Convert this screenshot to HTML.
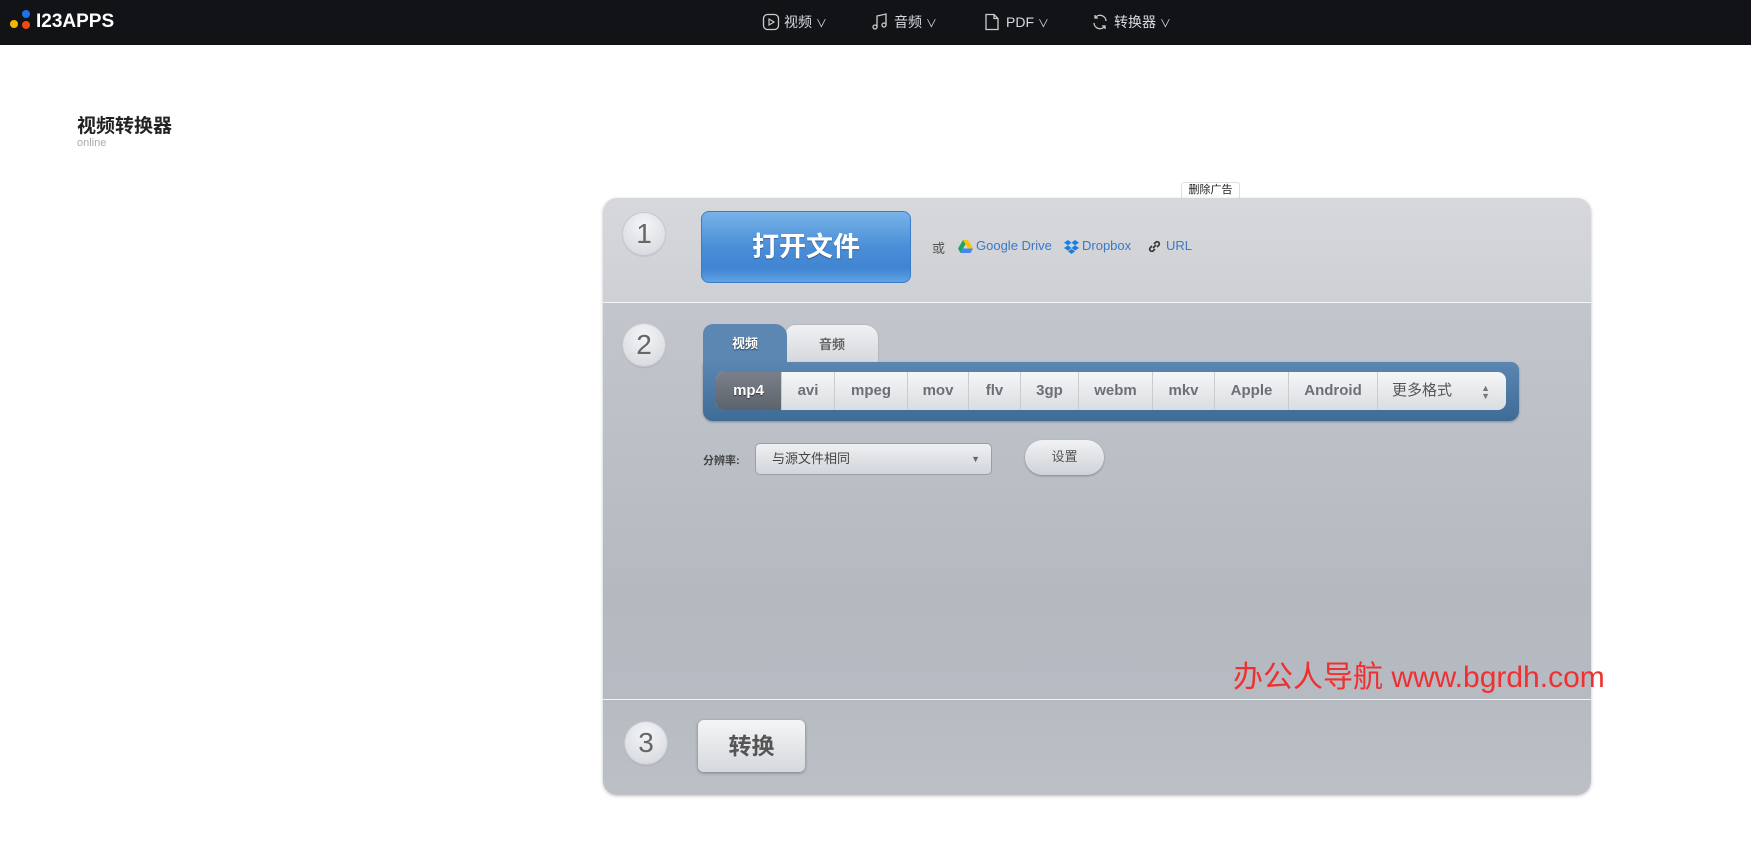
<!DOCTYPE html>
<html><head><meta charset="utf-8"><style>
*{margin:0;padding:0;box-sizing:border-box}
body{width:1751px;height:852px;background:#fff;font-family:"Liberation Sans","Noto Sans CJK SC",sans-serif;position:relative;overflow:hidden}
.nav{position:absolute;left:0;top:0;width:1751px;height:45px;background:#121317}
.abs{position:absolute}
.ni{position:absolute;top:12px;color:#d8dae0;font-size:14px;line-height:20px}
.ni svg{position:absolute;top:1px}
.box{position:absolute;left:603px;top:198px;width:988px;height:597px;border-radius:14px;overflow:hidden;
background:linear-gradient(#d7d8dc 0,#cdd0d4 104px,#c2c6cc 104px,#b4b9c0 400px,#b6bbc2 501px,#bcc0c6 597px);box-shadow:0 1px 3px rgba(0,0,0,.25)}
.line{position:absolute;left:0;width:988px;height:1px;background:#f2f3f5}
.circ{position:absolute;width:42px;height:42px;border-radius:50%;background:radial-gradient(circle at 50% 30%,#f4f5f7,#d2d5da);box-shadow:0 0 0 1px #c6c9ce,0 1px 2px rgba(0,0,0,.2);color:#666;font-size:28px;text-align:center;line-height:42px}
.fmt{position:absolute;top:0;height:38px;line-height:38px;text-align:center;color:#6b6f76;font-weight:bold;font-size:15px;border-right:1px solid #c8cbd0}
</style></head><body>
<div class="nav">
 <div class="abs" style="left:22px;top:10px;width:8px;height:8px;border-radius:50%;background:#1a73e8"></div>
 <div class="abs" style="left:10px;top:20px;width:8px;height:8px;border-radius:50%;background:#f6b600"></div>
 <div class="abs" style="left:22px;top:21px;width:8px;height:8px;border-radius:50%;background:#f04a12"></div>
 <div class="abs" style="left:36px;top:0;line-height:43px;color:#fff;font-weight:bold;font-size:19px">I23APPS</div>
 <div class="ni" style="left:762px"><svg width="18" height="18" viewBox="0 0 18 18" style="left:0"><rect x="1.5" y="1.5" width="15" height="15" rx="4" fill="none" stroke="#ccc" stroke-width="1.3"/><path d="M7 6v6l5-3z" fill="none" stroke="#ccc" stroke-width="1.2"/></svg><span style="margin-left:22px">视频 <small style="font-size:11px">∨</small></span></div>
 <div class="ni" style="left:871px"><svg width="18" height="18" viewBox="0 0 18 18" style="left:0"><path d="M6 14V3l9-2v11" fill="none" stroke="#ccc" stroke-width="1.3"/><circle cx="4" cy="14" r="2" fill="none" stroke="#ccc" stroke-width="1.3"/><circle cx="13" cy="12" r="2" fill="none" stroke="#ccc" stroke-width="1.3"/></svg><span style="margin-left:23px">音频 <small style="font-size:11px">∨</small></span></div>
 <div class="ni" style="left:983px"><svg width="18" height="18" viewBox="0 0 18 18" style="left:0"><path d="M3 1.5h8l4 4v11H3z M11 1.5v4h4" fill="none" stroke="#ccc" stroke-width="1.3"/></svg><span style="margin-left:23px">PDF <small style="font-size:11px">∨</small></span></div>
 <div class="ni" style="left:1091px"><svg width="18" height="18" viewBox="0 0 18 18" style="left:0"><path d="M15 8A6 6 0 0 0 4 5M3 10a6 6 0 0 0 11 3M4 2v3h3M14 16v-3h-3" fill="none" stroke="#ccc" stroke-width="1.3"/></svg><span style="margin-left:23px">转换器 <small style="font-size:11px">∨</small></span></div>
</div>
<div class="abs" style="left:77px;top:111px;font-size:19px;font-weight:bold;color:#222">视频转换器</div>
<div class="abs" style="left:77px;top:137px;font-size:11px;color:#aaa">online</div>
<div class="abs" style="left:1181px;top:182px;width:59px;height:16px;border:1px solid #ddd;border-bottom:none;border-radius:3px 3px 0 0;font-size:11px;line-height:15px;text-align:center;color:#222;background:#fff">删除广告</div>
<div class="box">
 <div class="line" style="top:104px"></div>
 <div class="line" style="top:501px"></div>
 <div class="circ" style="left:20px;top:15px">1</div>
 <div class="abs" style="left:98px;top:13px;width:210px;height:72px;border-radius:8px;background:linear-gradient(#78b3e8,#4a8ed8 50%,#4185d2 80%,#5fa2e4);border:1px solid #3a7cc8;color:#fff;font-size:27px;font-weight:bold;text-align:center;line-height:70px;text-shadow:0 1px 1px rgba(0,0,0,.35)">打开文件</div>
 <div class="abs" style="left:329px;top:40px;font-size:13px;color:#555">或</div>
 <svg class="abs" style="left:355px;top:42px" width="15" height="13" viewBox="0 0 15 13"><path d="M5 0h5l5 8.5h-5z" fill="#ffc107"/><path d="M5 0l2.5 4.3L2.5 13 0 8.5z" fill="#1fa463"/><path d="M2.5 13l2.5-4.5h10L12.5 13z" fill="#4285f4"/></svg>
 <div class="abs" style="left:373px;top:40px;font-size:13px;color:#3a78c8">Google Drive</div>
 <svg class="abs" style="left:461px;top:41px" width="15" height="15" viewBox="0 0 15 15"><path d="M4 1L0 3.7 4 6.3 7.5 3.7zM11 1L7.5 3.7 11 6.3 15 3.7zM0 9l4 2.6L7.5 9 4 6.3zM11 6.3L7.5 9l3.5 2.6L15 9zM4 12.4L7.5 15 11 12.4 7.5 10z" fill="#1a7ee0"/></svg>
 <div class="abs" style="left:479px;top:40px;font-size:13px;color:#3a78c8">Dropbox</div>
 <svg class="abs" style="left:544px;top:41px" width="15" height="15" viewBox="0 0 15 15"><path d="M6 9l3-3M5 7l-2 2a2.2 2.2 0 0 0 3 3l2-2M10 8l2-2a2.2 2.2 0 0 0-3-3L7 5" fill="none" stroke="#333" stroke-width="1.6"/></svg>
 <div class="abs" style="left:563px;top:40px;font-size:13px;color:#3a78c8">URL</div>

 <div class="circ" style="left:20px;top:126px">2</div>
 <div class="abs" style="left:182px;top:126px;width:94px;height:40px;border-radius:10px 14px 0 0;background:linear-gradient(#f0f1f3,#d4d7dc);border:1px solid #b5b9bf;color:#666;font-size:13px;font-weight:bold;text-align:center;line-height:40px">音频</div>
 <div class="abs" style="left:100px;top:126px;width:84px;height:40px;border-radius:10px 12px 0 0;background:#5c87b2;color:#fff;font-size:13px;font-weight:bold;text-align:center;line-height:40px;text-shadow:0 1px 1px #234">视频</div>
 <div class="abs" style="left:100px;top:164px;width:816px;height:59px;border-radius:0 8px 10px 10px;background:linear-gradient(#5b86b1,#3f6b97);box-shadow:0 1px 2px rgba(0,0,0,.3)">
  <div class="abs" style="left:13px;top:10px;width:790px;height:38px;border-radius:8px;overflow:hidden;background:linear-gradient(#f5f6f7,#dadde1)">
   <div class="fmt" style="left:0;width:66px;background:linear-gradient(#7a7f89,#5d636d);color:#fff;text-shadow:0 1px 1px #333">mp4</div>
   <div class="fmt" style="left:66px;width:53px">avi</div>
   <div class="fmt" style="left:119px;width:73px">mpeg</div>
   <div class="fmt" style="left:192px;width:61px">mov</div>
   <div class="fmt" style="left:253px;width:52px">flv</div>
   <div class="fmt" style="left:305px;width:58px">3gp</div>
   <div class="fmt" style="left:363px;width:74px">webm</div>
   <div class="fmt" style="left:437px;width:62px">mkv</div>
   <div class="fmt" style="left:499px;width:74px">Apple</div>
   <div class="fmt" style="left:573px;width:89px">Android</div>
   <div class="fmt" style="left:662px;width:128px;border:none;text-align:left;padding-left:14px;font-weight:normal;color:#555">更多格式<span style="position:absolute;right:16px;top:0;font-size:9px;line-height:8px;padding-top:12px;color:#777">▲<br>▼</span></div>
  </div>
 </div>
 <div class="abs" style="left:100px;top:254px;font-size:11px;color:#444;font-weight:bold">分辨率:</div>
 <div class="abs" style="left:152px;top:245px;width:237px;height:32px;border-radius:5px;border:1px solid #9a9ea5;background:linear-gradient(#eef0f2,#d2d5da);font-size:13px;color:#444;line-height:30px;padding-left:16px">与源文件相同<span style="position:absolute;right:11px;top:0;font-size:9px;color:#666">▼</span></div>
 <div class="abs" style="left:422px;top:242px;width:79px;height:35px;border-radius:18px;background:linear-gradient(#f1f2f4,#cfd2d7);box-shadow:0 1px 2px rgba(0,0,0,.3);font-size:13px;color:#555;text-align:center;line-height:34px">设置</div>

 <div class="circ" style="left:22px;top:524px">3</div>
 <div class="abs" style="left:95px;top:522px;width:107px;height:52px;border-radius:6px;background:linear-gradient(#f4f5f6,#d5d8dc);box-shadow:0 1px 3px rgba(0,0,0,.35);font-size:23px;font-weight:bold;color:#555;text-align:center;line-height:52px">转换</div>
</div>
<div class="abs" style="left:1233px;top:652px;font-size:30px;color:#f03030;white-space:nowrap">办公人导航 www.bgrdh.com</div>
</body></html>
